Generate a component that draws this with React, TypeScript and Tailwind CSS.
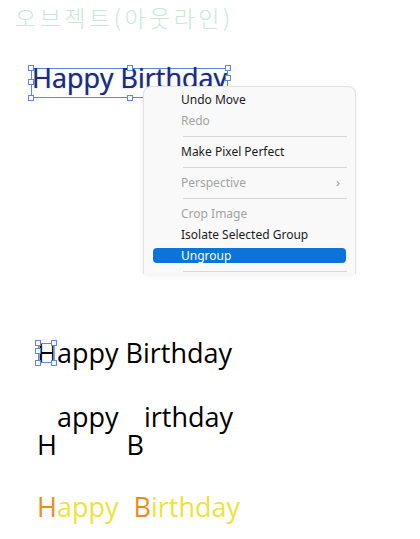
import React from "react";

const sans = "font-['Open_Sans',_'Noto_Sans',_sans-serif]";

function Handle({ className }: { className: string }) {
  return (
    <span
      className={`absolute w-[6px] h-[6px] bg-white border border-[#5b86f0] ${className}`}
    />
  );
}

type Item =
  | { kind: "item"; label: string; muted?: boolean; sub?: boolean; active?: boolean }
  | { kind: "sep" };

const menu: Item[] = [
  { kind: "item", label: "Undo Move" },
  { kind: "item", label: "Redo", muted: true },
  { kind: "sep" },
  { kind: "item", label: "Make Pixel Perfect" },
  { kind: "sep" },
  { kind: "item", label: "Perspective", muted: true, sub: true },
  { kind: "sep" },
  { kind: "item", label: "Crop Image", muted: true },
  { kind: "item", label: "Isolate Selected Group" },
  { kind: "item", label: "Ungroup", active: true },
  { kind: "sep" },
];

function ContextMenu() {
  return (
    <div className="absolute left-[143px] top-[86px] w-[213px] h-[188px] overflow-hidden rounded-t-[8px] border border-b-0 border-[#e3e3e3] bg-[#f9f9f9] pt-[2px] font-['Noto_Sans',_sans-serif] text-[12px] shadow-[0_2px_6px_rgba(0,0,0,0.06)]">
      {menu.map((it, i) =>
        it.kind === "sep" ? (
          <div key={i} className="h-[10px] flex items-center pl-[39px] pr-[8px]">
            <div className="h-px w-full bg-[#d6d6d6]" />
          </div>
        ) : (
          <div key={i} className="h-[21px] flex items-center px-[9px]">
            <div
              className={`flex h-[15px] w-full items-center justify-between rounded-[4px] pl-[28px] pr-[6px] ${
                it.active ? "bg-[#0a74d8] text-white" : it.muted ? "text-[#a3a3a3]" : "text-[#1b1b1b]"
              }`}
            >
              <span className="leading-none">{it.label}</span>
              {it.sub && <span className="text-[13px] leading-none text-[#9a9a9a]">›</span>}
            </div>
          </div>
        )
      )}
    </div>
  );
}

export default function App() {
  return (
    <div className="relative h-[539px] w-[420px] overflow-hidden bg-white">
      <div className="pl-[15px] font-['Noto_Sans_CJK_KR',_sans-serif] text-[23px] font-light leading-[34px] tracking-[3.5px] text-[#cae7d9]">
        오브젝트(아웃라인)
      </div>

      {/* selected outline text */}
      <div className="relative ml-[31px] mt-[34px] h-[30px] w-[197px] border border-[#5b86f0]">
        <span
          className={`${sans} absolute left-0 top-[-8px] whitespace-nowrap text-[27px] leading-[34px] text-[#1e2c78] [text-shadow:0_0_1px_#3b5bd6]`}
        >
          Happy Birthday
        </span>
        <Handle className="left-[-4px] top-[-4px]" />
        <Handle className="left-[95px] top-[-4px]" />
        <Handle className="right-[-4px] top-[-4px]" />
        <Handle className="left-[-4px] top-[10px]" />
        <Handle className="right-[-4px] top-[6px]" />
        <Handle className="left-[-4px] bottom-[-4px]" />
        <Handle className="left-[95px] bottom-[-4px]" />
      </div>

      <ContextMenu />

      <div className={`${sans} ml-[37px] mt-[238px] flex flex-col text-[27px] leading-[34px] text-black`}>
        <div className="whitespace-nowrap">
          <span className="relative">
            H
            <span className="absolute left-[1px] top-[9px] h-[20px] w-[16px] border border-[#5b86f0]" />
            <Handle className="left-[-2px] top-[6px]" />
            <Handle className="left-[14px] top-[6px]" />
            <Handle className="left-[-2px] top-[14px]" />
            <Handle className="left-[-2px] top-[26px]" />
            <Handle className="left-[14px] top-[26px]" />
          </span>
          appy Birthday
        </div>

        <div className="mt-[30px] flex items-start whitespace-nowrap">
          <span className="mt-[28px]">H</span>
          <span>appy</span>
          <span className="mt-[28px] ml-[8px]">B</span>
          <span>irthday</span>
        </div>

        <div className="mt-[28px] flex whitespace-nowrap">
          <span className="text-[#f38a1c]">H</span>
          <span className="text-[#efe23a]">appy</span>
          <span className="ml-[15px] text-[#f38a1c]">B</span>
          <span className="text-[#efe23a]">irthday</span>
        </div>
      </div>
    </div>
  );
}
